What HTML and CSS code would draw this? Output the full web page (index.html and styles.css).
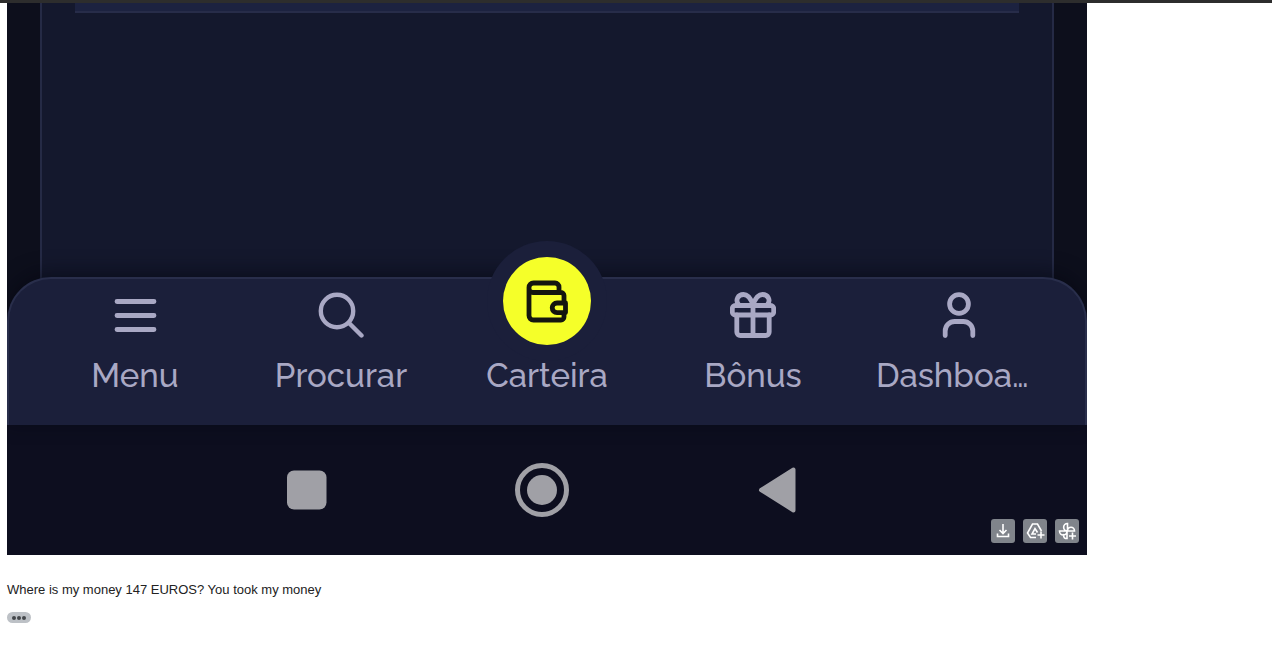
FILE: index.html
```
<!DOCTYPE html>
<html lang="pt">
<head>
  <meta charset="UTF-8">
  <title>Message</title>
  <link rel="stylesheet" href="styles.css">
</head>
<body>
  <header class="top-edge"></header>
  <main class="message">
    <div class="attachment">
      <div class="screen">
        <div class="card">
          <div class="field"></div>
        </div>
      </div>

      <nav class="tab-bar">
        <a class="tab" href="#menu">
          <svg class="tab-icon" viewBox="0 0 46 46">
            <path d="M5 9.500h37M5 23.500h37M5 37.500h37"/>
          </svg>
          <span class="tab-label">Menu</span>
        </a>
        <a class="tab" href="#procurar">
          <svg class="tab-icon thin" viewBox="0 0 46 46">
            <circle cx="19" cy="19" r="16.200"/>
            <path d="M31 31L43.500 43.500"/>
          </svg>
          <span class="tab-label">Procurar</span>
        </a>
        <a class="tab" href="#carteira">
          <span class="tab-circle">
            <svg class="wallet-icon" viewBox="0 0 44 44">
              <path d="M34 13V8a4 4 0 0 0-4-4H8.500a4.500 4.500 0 0 0-4.500 4.500v28a4.500 4.500 0 0 0 4.500 4.500H36a3 3 0 0 0 3-3v-5.500M4 9.500a4 4 0 0 0 4 4H36a3 3 0 0 1 3 3v6.500"/>
              <path d="M40.500 24h-8.500a4.800 4.800 0 0 0 0 9.600h8.500z"/>
            </svg>
          </span>
          <span class="tab-label">Carteira</span>
        </a>
        <a class="tab" href="#bonus">
          <svg class="tab-icon" viewBox="0 0 46 46">
            <rect x="2.300" y="13.500" width="41.400" height="9.500" rx="3"/>
            <path d="M6.800 23v17a3.500 3.500 0 0 0 3.500 3.500h25.400a3.500 3.500 0 0 0 3.500-3.500V23M23 13v30.500"/>
            <path d="M8.500 12.500C5 8 8 2.500 13.500 2.500C18 2.500 20.500 6 23 12.500C25.500 6 28 2.500 32.500 2.500C38 2.500 41 8 37.500 12.500"/>
          </svg>
          <span class="tab-label">Bônus</span>
        </a>
        <a class="tab" href="#dashboard">
          <svg class="tab-icon" viewBox="0 0 46 46">
            <circle cx="23" cy="12" r="9.400"/>
            <path d="M9.200 43.500V39a9.500 9.500 0 0 1 9.500-9.500h8.600a9.500 9.500 0 0 1 9.500 9.500v4.500"/>
          </svg>
          <span class="tab-label truncated">Dashboa…</span>
        </a>
      </nav>

      <div class="system-bar">
        <button class="system-button" aria-label="Recent">
          <svg viewBox="0 0 56 56"><rect x="8" y="8.500" width="39.500" height="39" rx="7"/></svg>
        </button>
        <button class="system-button" aria-label="Home">
          <svg viewBox="0 0 56 56">
            <circle class="ring" cx="28" cy="28" r="24.500"/>
            <circle cx="28" cy="28" r="15"/>
          </svg>
        </button>
        <button class="system-button" aria-label="Back">
          <svg viewBox="0 0 56 56"><path class="arrow" d="M12 28L44.500 7.500V48.500z"/></svg>
        </button>
      </div>

      <div class="actions">
        <button class="action" aria-label="Download">
          <svg viewBox="0 0 24 24">
            <path d="M12 5v9M8.500 11l3.500 3.500L15.500 11M6.500 14.500v3h11v-3"/>
          </svg>
        </button>
        <button class="action" aria-label="Add to Drive">
          <svg viewBox="0 0 24 24">
            <path d="M13 18.500H7.500L4.500 14L9.500 5h5l4 7M13 15H9l3-5.500l2.500 4M18 12.500v7M14.500 16h7"/>
          </svg>
        </button>
        <button class="action" aria-label="Add to Photos">
          <svg viewBox="0 0 24 24">
            <path d="M12.500 12V4.500a3.800 3.700 0 0 0 0 7.500M12.500 12h7a3.500 3.800 0 0 0-7 0M12 12H4.500a3.700 4 0 0 0 7.500 0M12 12v7.500H10.500a2.500 3 0 0 1-1.500-4.500M17.500 13.500v7M14 17h7"/>
          </svg>
        </button>
      </div>
    </div>

    <p class="message-text">Where is my money 147 EUROS? You took my money</p>
    <button class="more" aria-label="Show trimmed content">
      <span class="dot"></span><span class="dot"></span><span class="dot"></span>
    </button>
  </main>
</body>
</html>
```
FILE: styles.css
```
* {
  box-sizing: border-box;
}

body {
  margin: 0;
  background: #fff;
  color: #222;
  font-family: "Liberation Sans", Arial, sans-serif;
}

button {
  margin: 0;
  padding: 0;
  border: none;
  background: none;
  cursor: pointer;
}

.top-edge {
  height: 3px;
  background: #2d2d2d;
}

.message {
  padding: 0 7px;
}

.attachment {
  position: relative;
  max-width: 1080px;
  overflow: hidden;
  background: #0d0f1c;
}

.screen {
  padding: 0 33px;
}

.card {
  height: 290px;
  padding: 0 33px;
  border: solid #252a45;
  border-width: 0 2px;
  background: #14182d;
}

.field {
  height: 10px;
  border-bottom: 2px solid #272c49;
  background: #1c2240;
}

.tab-bar {
  position: relative;
  display: grid;
  grid-template-columns: repeat(5, 1fr);
  margin-top: -16px;
  padding: 13px 23px 29px;
  border: 2px solid #292e4b;
  border-bottom: none;
  border-radius: 44px 44px 0 0;
  background: #1b1f3a;
  box-shadow: 0 -4px 20px rgba(5, 6, 16, 0.6);
}

.tab {
  display: flex;
  flex-direction: column;
  align-items: center;
  color: #a9a8c4;
  text-decoration: none;
}

.tab-icon {
  width: 46px;
  height: 46px;
  margin-bottom: 18px;
  fill: none;
  stroke: currentColor;
  stroke-width: 4.8;
  stroke-linecap: round;
  stroke-linejoin: round;
}

.tab-icon.thin {
  stroke-width: 4.4;
}

.tab-circle {
  display: flex;
  align-items: center;
  justify-content: center;
  width: 88px;
  height: 88px;
  margin-top: -35px;
  margin-bottom: 11px;
  border-radius: 50%;
  background: #f5ff29;
  box-shadow: 0 0 0 16px #1b1f3a;
}

.wallet-icon {
  width: 44px;
  height: 44px;
  fill: none;
  stroke: #14150f;
  stroke-width: 4.8;
  stroke-linejoin: round;
}

.tab-label {
  font-family: Raleway, Lato, sans-serif;
  font-size: 33px;
  font-weight: 500;
  line-height: 40px;
}

.tab-label.truncated {
  min-width: 166px;
}

.system-bar {
  display: grid;
  grid-template-columns: repeat(3, 1fr);
  align-items: center;
  justify-items: center;
  height: 130px;
  padding: 0 192px 0 182px;
  background: #0d0e1f;
}

.system-button {
  width: 56px;
  height: 56px;
}

.system-button svg {
  display: block;
  fill: #a0a0a6;
}

.system-button .ring {
  fill: none;
  stroke: #a0a0a6;
  stroke-width: 5;
}

.system-button .arrow {
  stroke: #a0a0a6;
  stroke-width: 4;
  stroke-linejoin: round;
}

.actions {
  position: absolute;
  right: 8px;
  bottom: 12px;
  display: flex;
  gap: 8px;
}

.action {
  width: 24px;
  height: 24px;
  border-radius: 3px;
  background: #80848b;
}

.action svg {
  display: block;
  fill: none;
  stroke: #fff;
  stroke-width: 1.6;
}

.message-text {
  margin: 26px 0 13px;
  font-size: 13px;
  line-height: 18px;
}

.more {
  display: flex;
  align-items: center;
  justify-content: center;
  gap: 1px;
  width: 24px;
  height: 11px;
  border-radius: 6px;
  background: #bdc1c6;
}

.dot {
  width: 4px;
  height: 4px;
  border-radius: 50%;
  background: #44474b;
}
```
